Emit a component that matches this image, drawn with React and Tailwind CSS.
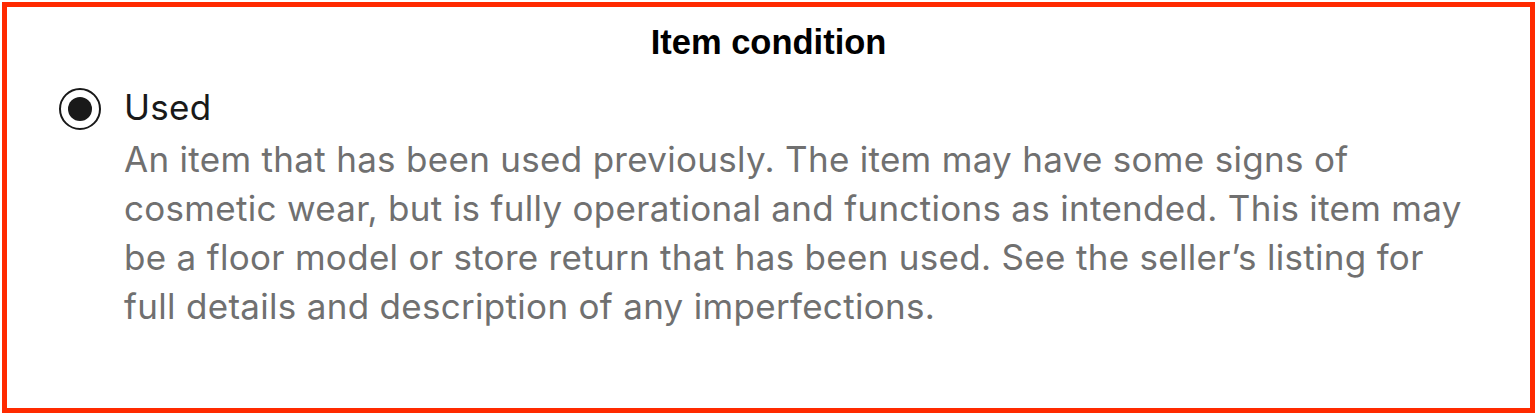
export default function App() {
  return (
    <div className="w-[1537px] h-[415px] bg-white p-[2px]">
      <div className="h-full border-[5px] border-[#ff2a00] bg-white">
        <h2 className="pt-[15px] text-center text-[34.5px] leading-[40px] font-bold text-black font-['Liberation_Sans',Arial,sans-serif]">
          Item condition
        </h2>
        <div className="mt-[21px] flex items-start font-['Inter',sans-serif]">
          <div className="ml-[52px] mt-[5px] flex h-[42px] w-[42px] shrink-0 items-center justify-center rounded-full border-[2.5px] border-[#191919]">
            <div className="h-[24px] w-[24px] rounded-full bg-[#191919]" />
          </div>
          <div className="ml-[23px] w-[1345px] text-[35px] leading-[49px] tracking-[0.3px]">
            <div className="text-[#191919]">Used</div>
            <p className="mt-[3px] text-[#707070]">
              An item that has been used previously. The item may have some signs of cosmetic wear, but is fully operational and functions as intended. This item may be a floor model or store return that has been used. See the seller’s listing for full details and description of any imperfections.
            </p>
          </div>
        </div>
      </div>
    </div>
  );
}
